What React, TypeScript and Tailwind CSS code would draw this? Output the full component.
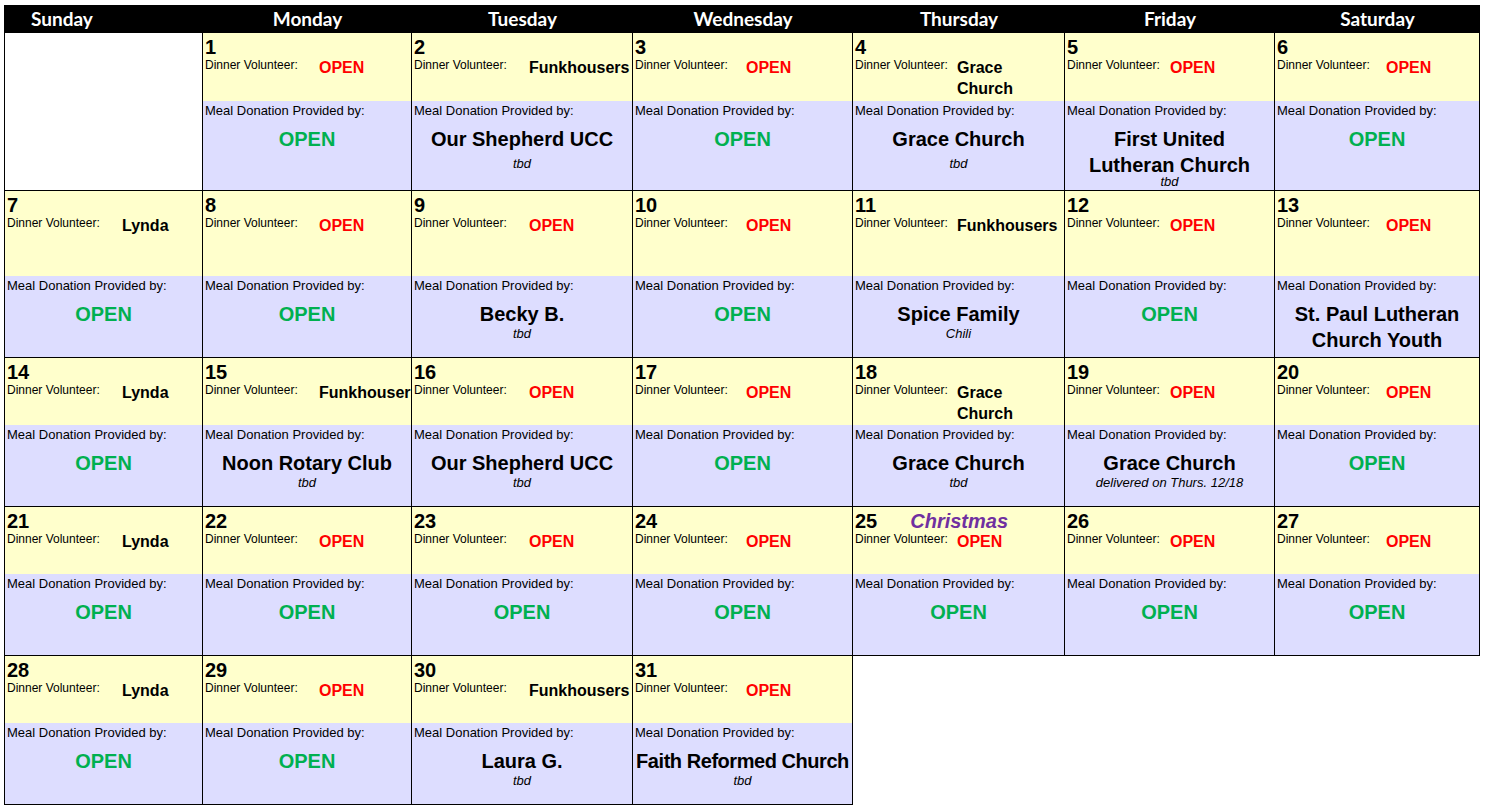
import React from "react";

type Day = {
  d: number;
  vol: string;
  meal: string;
  sub?: string;
  holiday?: string;
  subMt?: string;
  mealFit?: string;
};

type Slot = Day | "empty" | "none";

type Week = {
  yellow: string;
  purple: string;
  subMt: string;
  days: Slot[];
};

const DAY_NAMES = ["Sunday", "Monday", "Tuesday", "Wednesday", "Thursday", "Friday", "Saturday"];

// where the volunteer name starts inside each column
const LABEL_W = ["w-[115px]", "w-[114px]", "w-[115px]", "w-[111px]", "w-[102px]", "w-[103px]", "w-[109px]"];

const weeks: Week[] = [
  {
    yellow: "h-[68px]",
    purple: "h-[89px]",
    subMt: "mt-[4px]",
    days: [
      "empty",
      { d: 1, vol: "OPEN", meal: "OPEN" },
      { d: 2, vol: "Funkhousers", meal: "Our Shepherd UCC", sub: "tbd" },
      { d: 3, vol: "OPEN", meal: "OPEN" },
      { d: 4, vol: "Grace|Church", meal: "Grace Church", sub: "tbd" },
      { d: 5, vol: "OPEN", meal: "First United|Lutheran Church", sub: "tbd", subMt: "mt-[-4px]" },
      { d: 6, vol: "OPEN", meal: "OPEN" },
    ],
  },
  {
    yellow: "h-[85px]",
    purple: "h-[81px]",
    subMt: "mt-[-1px]",
    days: [
      { d: 7, vol: "Lynda", meal: "OPEN" },
      { d: 8, vol: "OPEN", meal: "OPEN" },
      { d: 9, vol: "OPEN", meal: "Becky B.", sub: "tbd" },
      { d: 10, vol: "OPEN", meal: "OPEN" },
      { d: 11, vol: "Funkhousers", meal: "Spice Family", sub: "Chili" },
      { d: 12, vol: "OPEN", meal: "OPEN" },
      { d: 13, vol: "OPEN", meal: "St. Paul Lutheran|Church Youth" },
    ],
  },
  {
    yellow: "h-[67px]",
    purple: "h-[81px]",
    subMt: "mt-[-1px]",
    days: [
      { d: 14, vol: "Lynda", meal: "OPEN" },
      { d: 15, vol: "Funkhousers", meal: "Noon Rotary Club", sub: "tbd" },
      { d: 16, vol: "OPEN", meal: "Our Shepherd UCC", sub: "tbd" },
      { d: 17, vol: "OPEN", meal: "OPEN" },
      { d: 18, vol: "Grace|Church", meal: "Grace Church", sub: "tbd" },
      { d: 19, vol: "OPEN", meal: "Grace Church", sub: "delivered on Thurs. 12/18" },
      { d: 20, vol: "OPEN", meal: "OPEN" },
    ],
  },
  {
    yellow: "h-[67px]",
    purple: "h-[81px]",
    subMt: "mt-[-1px]",
    days: [
      { d: 21, vol: "Lynda", meal: "OPEN" },
      { d: 22, vol: "OPEN", meal: "OPEN" },
      { d: 23, vol: "OPEN", meal: "OPEN" },
      { d: 24, vol: "OPEN", meal: "OPEN" },
      { d: 25, vol: "OPEN", meal: "OPEN", holiday: "Christmas" },
      { d: 26, vol: "OPEN", meal: "OPEN" },
      { d: 27, vol: "OPEN", meal: "OPEN" },
    ],
  },
  {
    yellow: "h-[67px]",
    purple: "h-[81px]",
    subMt: "mt-[-1px]",
    days: [
      { d: 28, vol: "Lynda", meal: "OPEN" },
      { d: 29, vol: "OPEN", meal: "OPEN" },
      { d: 30, vol: "Funkhousers", meal: "Laura G.", sub: "tbd" },
      { d: 31, vol: "OPEN", meal: "Faith Reformed Church", sub: "tbd", mealFit: "tracking-[-0.45px]" },
      "none",
      "none",
      "none",
    ],
  },
];

const Lines: React.FC<{ text: string }> = ({ text }) => (
  <>
    {text.split("|").map((t) => (
      <div key={t}>{t}</div>
    ))}
  </>
);

const DayCell: React.FC<{ slot: Slot; week: Week; col: number }> = ({ slot, week, col }) => {
  if (slot === "none") return <div />;
  if (slot === "empty") return <div className="border-r border-b border-black bg-white" />;

  const volOpen = slot.vol === "OPEN";
  const mealOpen = slot.meal === "OPEN";

  return (
    <div className="flex flex-col overflow-hidden border-r border-b border-black">
      <div className={`${week.yellow} shrink-0 bg-[#ffffcc] pl-[2px] pt-[4px]`}>
        <div className="flex items-baseline text-[20px] font-bold leading-[20px]">
          <span>{slot.d}</span>
          {slot.holiday && (
            <span className="ml-[33px] text-[20px] italic text-[#7030a0]">{slot.holiday}</span>
          )}
        </div>
        <div className="flex items-start">
          <div className={`${LABEL_W[col]} mt-[1px] shrink-0 text-[12px] leading-[14px]`}>Dinner Volunteer:</div>
          <div
            className={`whitespace-nowrap text-[16px] font-bold leading-[21px] ${
              volOpen ? "text-[#ff0000]" : "text-black"
            }`}
          >
            <Lines text={slot.vol} />
          </div>
        </div>
      </div>
      <div className={`${week.purple} shrink-0 bg-[#ddddff] px-[2px] pt-[2px]`}>
        <div className="whitespace-nowrap text-[13px] leading-[15px]">Meal Donation Provided by:</div>
        <div
          className={`mt-[8px] whitespace-nowrap text-center text-[20px] font-bold leading-[26px] ${
            mealOpen ? "text-[#00b050]" : "text-black"
          } ${slot.mealFit ?? ""}`}
        >
          <Lines text={slot.meal} />
        </div>
        {slot.sub && (
          <div className={`${slot.subMt ?? week.subMt} whitespace-nowrap text-center text-[13px] italic leading-[15px]`}>
            {slot.sub}
          </div>
        )}
      </div>
    </div>
  );
};

export default function App() {
  return (
    <div className="min-h-screen bg-white pl-[4px] pt-[5px] text-black font-['Liberation_Sans',Arial,sans-serif]">
      <div className="grid w-[1476px] grid-cols-[198px_209px_221px_220px_212px_210px_205px] border-l border-black">
        {DAY_NAMES.map((name, i) => (
          <div
            key={name}
            className={`h-[28px] bg-black font-['Lato',sans-serif] text-[19px] font-bold leading-[28px] text-white ${
              i === 0 ? "pl-[26px] text-left" : "text-center"
            }`}
          >
            {name}
          </div>
        ))}
        {weeks.map((week, w) =>
          week.days.map((slot, i) => <DayCell key={`${w}-${i}`} slot={slot} week={week} col={i} />)
        )}
      </div>
    </div>
  );
}
